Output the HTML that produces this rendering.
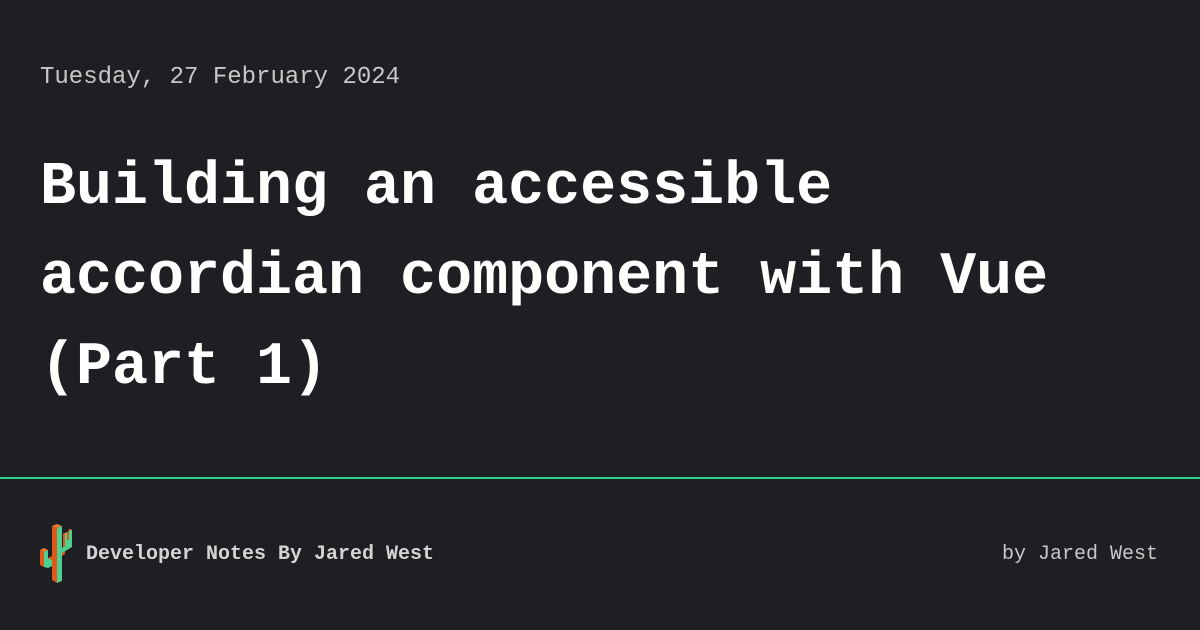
<!DOCTYPE html>
<html><head><meta charset="utf-8"><style>
html,body{margin:0;padding:0}
body{width:1200px;height:630px;background:#1e1f22;position:relative;overflow:hidden;font-family:"Liberation Mono",monospace}
.date{position:absolute;left:40px;top:62px;font-size:24px;color:#c8c8c8;line-height:32px}
.title{position:absolute;left:40px;top:143px;font-size:60px;font-weight:bold;color:#fff;line-height:90px;white-space:pre}
.line{position:absolute;left:0;top:477px;width:1200px;height:2px;background:#2fd08a}
.brand{position:absolute;left:86px;top:542px;font-size:20px;font-weight:bold;color:#d4d4d4;line-height:26px}
.by{position:absolute;right:42px;top:542px;font-size:20px;color:#c8c8c8;line-height:26px}
svg{position:absolute;left:36px;top:518px}
</style></head><body>
<div class="date">Tuesday, 27 February 2024</div>
<div class="title">Building an accessible
accordian component with Vue
(Part 1)</div>
<div class="line"></div>
<svg width="44" height="70" viewBox="0 0 44 70">
<!-- right arm -->
<polygon points="27,16 29,15 29,36 21,41 21,37 27,33" fill="#e0571a"/>
<polygon points="29,15 31,14 31,22 33,21 33,13 36,12 36,29 21,38 21,33 29,28" fill="#4fcf8f"/>
<polygon points="27,16 29,15 31,16 29,17" fill="#f07a30"/>
<polygon points="32,12 34,11 36,12 34,13" fill="#f07a30"/>
<polygon points="31,14 33,13 33,21 31,22" fill="#e0571a"/>
<!-- trunk -->
<polygon points="16,8 21,10 21,65 16,62" fill="#e0571a"/>
<polygon points="21,10 26,8 26,63 21,65" fill="#4fcf8f"/>
<polygon points="16,8 21,6 26,8 21,10" fill="#f07a30"/>
<!-- left arm -->
<polygon points="4,32 8,34 8,49 4,47" fill="#e0571a"/>
<polygon points="8,34 12,32 12,40 16,42 16,48 12,50 8,49" fill="#4fcf8f"/>
<polygon points="4,32 8,30 12,32 8,34" fill="#f07a30"/>
<polygon points="12,40 16,38 16,42" fill="#e0571a"/>
</svg>
<div class="brand">Developer Notes By Jared West</div>
<div class="by">by Jared West</div>
</body></html>
